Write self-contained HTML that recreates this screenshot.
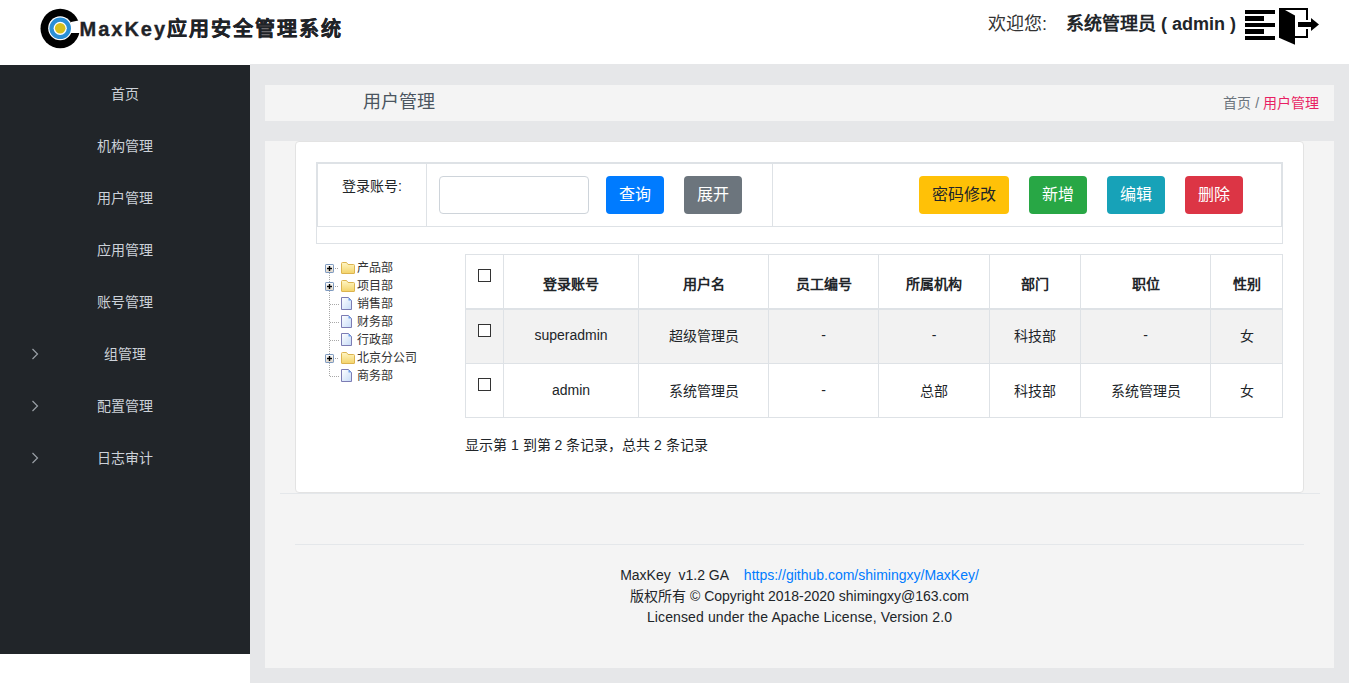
<!DOCTYPE html>
<html lang="zh-CN"><head><meta charset="utf-8">
<style>
*{box-sizing:border-box;margin:0;padding:0}
html,body{width:1349px;height:683px;overflow:hidden;background:#fff;font-family:"Liberation Sans",sans-serif;color:#212529;font-size:14px}
.abs{position:absolute}
#header{position:absolute;left:0;top:0;width:1349px;height:64px;background:#fff}
#title{position:absolute;left:79.5px;top:15px;font-size:20px;font-weight:bold;letter-spacing:2px;color:#1f2328;-webkit-text-stroke:0.35px #1f2328;line-height:28px;white-space:nowrap}
#welcome{position:absolute;left:988px;top:11px;font-size:18px;line-height:26px;color:#333;white-space:nowrap}
#welcome2{position:absolute;left:1066px;top:11px;font-size:18px;line-height:26px;color:#212529;font-weight:bold;white-space:nowrap}
#sidebar{position:absolute;left:0;top:65px;width:250px;height:589px;background:#212529}
#sideitems .item{position:absolute;left:0;width:250px;text-align:center;color:#ccd1d8;font-size:14px;line-height:20px}
#sidebar .chev{position:absolute;left:32px;width:6px;height:11px}
#main{position:absolute;left:250px;top:64px;width:1099px;height:619px;background:#e6e7e9}
#crumb{position:absolute;left:265px;top:85px;width:1069px;height:36px;background:#f4f4f4}
#crumb .t{position:absolute;left:98px;top:4.5px;font-size:18px;line-height:24px;color:#4b5560}
#crumb .r{position:absolute;right:15px;top:8px;font-size:14px;line-height:20px;color:#6c757d}
#crumb .r span{color:#e91e63}
#panel{position:absolute;left:265px;top:141px;width:1069px;height:527px;background:#f4f4f4}
#card{position:absolute;left:295px;top:141px;width:1009px;height:352px;background:#fff;border:1px solid #e3e3e3;border-radius:4px}

#sform{position:absolute;left:316px;top:162px;width:967px;height:82px;border:1px solid #dee2e6}
#sform .c1{position:absolute;left:0;top:0;width:110px;height:64px;border:1px solid #dee2e6}
#sform .c2{position:absolute;left:109px;top:0;width:347px;height:64px;border:1px solid #dee2e6}
#sform .c3{position:absolute;left:455px;top:0;width:510px;height:64px;border:1px solid #dee2e6}
.lbl{position:absolute;left:342px;top:176px;font-size:14px;line-height:20px;color:#212529}
.inp{position:absolute;left:439px;top:176px;width:150px;height:38px;border:1px solid #ced4da;border-radius:4px;background:#fff}
.btn{position:absolute;top:176px;height:38px;border-radius:4px;color:#fff;font-size:16px;line-height:38px;text-align:center}
.tree{position:absolute;left:325px;top:258px;font-size:12px;color:#333}
.tree .row{position:absolute;left:0;height:18px;line-height:18px;white-space:nowrap}
#tbl{position:absolute;left:465px;top:254px;border-collapse:collapse;border:1px solid #dee2e6}
#tbl td,#tbl th{border:1px solid #dee2e6;text-align:center;font-size:14px;color:#212529;vertical-align:middle;padding:0 0 2px 0}
#tbl th{font-weight:bold;border-bottom:2px solid #dee2e6;padding-top:5px}
#tbl tr.odd td{background:#f2f2f2}
.cb{display:inline-block;width:13px;height:13px;border:1px solid #333;background:#fff;vertical-align:top}
.pg{position:absolute;left:465px;top:435px;font-size:14px;line-height:20px;color:#212529;white-space:nowrap}
.hr1{position:absolute;left:280px;top:493px;width:1040px;height:1px;background:#e4e7ea}
.hr2{position:absolute;left:295px;top:544px;width:1009px;height:1px;background:#e4e7ea}
#foot{position:absolute;left:265px;top:565px;width:1069px;text-align:center;font-size:14px;line-height:21px;color:#212529}
#foot a{color:#007bff;text-decoration:none}
.trow{position:absolute;left:357px;height:18px;line-height:18px;font-size:12px;color:#333;white-space:nowrap}
</style></head><body>
<div id="header">
 <svg class="abs" style="left:40px;top:8px" width="41" height="41" viewBox="0 0 41 41">
  <circle cx="20.2" cy="20.5" r="19.7" fill="#000"/>
  <polygon points="31,14 41,12 41,25 31,25" fill="#fff"/>
  <circle cx="20.2" cy="20.3" r="12" fill="#fff"/>
  <circle cx="20.2" cy="20.3" r="10.8" fill="#2a8fd6"/>
  <circle cx="20.2" cy="20.3" r="6.6" fill="#fff"/>
  <circle cx="20.2" cy="20.3" r="5.3" fill="#d6bf1d"/>
 </svg>
 <div id="title">MaxKey应用安全管理系统</div>
 <div id="welcome">欢迎您:</div><div id="welcome2">系统管理员 ( admin )</div>
 <svg class="abs" style="left:1240px;top:0px" width="90" height="50" viewBox="0 0 90 50">
  <rect x="5" y="10" width="30" height="4" fill="#000"/>
  <rect x="5" y="16" width="19" height="5" fill="#000"/>
  <rect x="5" y="23" width="30" height="4" fill="#000"/>
  <rect x="5" y="29" width="19" height="5" fill="#000"/>
  <rect x="5" y="36" width="30" height="4" fill="#000"/>
  <rect x="39" y="8" width="29" height="2" fill="#000"/>
  <rect x="66" y="8" width="2" height="12" fill="#000"/>
  <rect x="66" y="29" width="2" height="9" fill="#000"/>
  <rect x="55" y="36" width="13" height="2" fill="#000"/>
  <polygon points="39,8 45,10 55,15.4 55,44.7 39,37.7" fill="#000"/>
  <rect x="58" y="22" width="13" height="5" fill="#000"/>
  <polygon points="71,18 79,24.5 71,31" fill="#000"/>
 </svg>
</div>
<div id="sidebar"></div>
<div id="sideitems"><div class="item" style="top:84px">首页</div>
<div class="item" style="top:136px">机构管理</div>
<div class="item" style="top:188px">用户管理</div>
<div class="item" style="top:240px">应用管理</div>
<div class="item" style="top:292px">账号管理</div>
<div class="item" style="top:344px">组管理</div>
<svg class="abs" style="left:31px;top:348px" width="8" height="12" viewBox="0 0 8 12"><polyline points="1.5,1 6.5,6 1.5,11" fill="none" stroke="#9aa0a6" stroke-width="1.2"/></svg>
<div class="item" style="top:396px">配置管理</div>
<svg class="abs" style="left:31px;top:400px" width="8" height="12" viewBox="0 0 8 12"><polyline points="1.5,1 6.5,6 1.5,11" fill="none" stroke="#9aa0a6" stroke-width="1.2"/></svg>
<div class="item" style="top:448px">日志审计</div>
<svg class="abs" style="left:31px;top:452px" width="8" height="12" viewBox="0 0 8 12"><polyline points="1.5,1 6.5,6 1.5,11" fill="none" stroke="#9aa0a6" stroke-width="1.2"/></svg>
</div>
<div id="main"></div>
<div id="crumb"><div class="t">用户管理</div><div class="r">首页 / <span>用户管理</span></div></div>
<div id="panel"></div>
<div id="card"></div>

<div id="sform"><div class="c1"></div><div class="c2"></div><div class="c3"></div></div>
<div class="lbl">登录账号:</div>
<div class="inp"></div>
<div class="btn" style="left:606px;width:58px;background:#007bff">查询</div>
<div class="btn" style="left:684px;width:58px;background:#6c757d">展开</div>
<div class="btn" style="left:919px;width:90px;background:#ffc107;color:#212529">密码修改</div>
<div class="btn" style="left:1029px;width:58px;background:#28a745">新增</div>
<div class="btn" style="left:1107px;width:58px;background:#17a2b8">编辑</div>
<div class="btn" style="left:1185px;width:58px;background:#dc3545">删除</div>
<svg class="abs" style="left:320px;top:255px" width="40" height="135" viewBox="0 0 40 135">
<defs><linearGradient id="gf" x1="0" y1="0" x2="0" y2="1"><stop offset="0" stop-color="#fff6c4"/><stop offset="1" stop-color="#f3d36a"/></linearGradient>
<linearGradient id="gp" x1="0" y1="0" x2="1" y2="1"><stop offset="0" stop-color="#ffffff"/><stop offset="1" stop-color="#c6dbf7"/></linearGradient>
<linearGradient id="gb" x1="0" y1="0" x2="0" y2="1"><stop offset="0" stop-color="#ffffff"/><stop offset="1" stop-color="#ddd5c8"/></linearGradient></defs>
<line x1="9.5" y1="18" x2="9.5" y2="121.5" stroke="#a8a8a8" stroke-width="1" stroke-dasharray="1,1"/>
<line x1="15" y1="13.5" x2="19" y2="13.5" stroke="#a8a8a8" stroke-dasharray="1,1"/>
<rect x="5.5" y="9.5" width="8" height="8" rx="0.6" fill="url(#gb)" stroke="#7d9ac0"/>
<rect x="7" y="12.8" width="5" height="1.4" fill="#000"/><rect x="8.8" y="11" width="1.4" height="5" fill="#000"/>
<path transform="translate(21,7)" d="M0.5,1.5 Q0.5,0.5 1.5,0.5 L5.5,0.5 L7,2.5 L12.5,2.5 Q13.5,2.5 13.5,3.5 L13.5,11 Q13.5,11.5 13,11.5 L1,11.5 Q0.5,11.5 0.5,11 Z" fill="url(#gf)" stroke="#dcb450"/>
<line x1="15" y1="31.5" x2="19" y2="31.5" stroke="#a8a8a8" stroke-dasharray="1,1"/>
<rect x="5.5" y="27.5" width="8" height="8" rx="0.6" fill="url(#gb)" stroke="#7d9ac0"/>
<rect x="7" y="30.8" width="5" height="1.4" fill="#000"/><rect x="8.8" y="29" width="1.4" height="5" fill="#000"/>
<path transform="translate(21,25)" d="M0.5,1.5 Q0.5,0.5 1.5,0.5 L5.5,0.5 L7,2.5 L12.5,2.5 Q13.5,2.5 13.5,3.5 L13.5,11 Q13.5,11.5 13,11.5 L1,11.5 Q0.5,11.5 0.5,11 Z" fill="url(#gf)" stroke="#dcb450"/>
<line x1="10" y1="49.5" x2="19" y2="49.5" stroke="#a8a8a8" stroke-dasharray="1,1"/>
<path transform="translate(21,42)" d="M0.5,0.5 L7.5,0.5 L10.5,3.5 L10.5,12.5 L0.5,12.5 Z" fill="url(#gp)" stroke="#7c7cb4"/>
<path transform="translate(21,42)" d="M7.5,0.5 L10.5,3.5 L7.5,3.5 Z" fill="#6d9ee8"/>
<line x1="10" y1="67.5" x2="19" y2="67.5" stroke="#a8a8a8" stroke-dasharray="1,1"/>
<path transform="translate(21,60)" d="M0.5,0.5 L7.5,0.5 L10.5,3.5 L10.5,12.5 L0.5,12.5 Z" fill="url(#gp)" stroke="#7c7cb4"/>
<path transform="translate(21,60)" d="M7.5,0.5 L10.5,3.5 L7.5,3.5 Z" fill="#6d9ee8"/>
<line x1="10" y1="85.5" x2="19" y2="85.5" stroke="#a8a8a8" stroke-dasharray="1,1"/>
<path transform="translate(21,78)" d="M0.5,0.5 L7.5,0.5 L10.5,3.5 L10.5,12.5 L0.5,12.5 Z" fill="url(#gp)" stroke="#7c7cb4"/>
<path transform="translate(21,78)" d="M7.5,0.5 L10.5,3.5 L7.5,3.5 Z" fill="#6d9ee8"/>
<line x1="15" y1="103.5" x2="19" y2="103.5" stroke="#a8a8a8" stroke-dasharray="1,1"/>
<rect x="5.5" y="99.5" width="8" height="8" rx="0.6" fill="url(#gb)" stroke="#7d9ac0"/>
<rect x="7" y="102.8" width="5" height="1.4" fill="#000"/><rect x="8.8" y="101" width="1.4" height="5" fill="#000"/>
<path transform="translate(21,97)" d="M0.5,1.5 Q0.5,0.5 1.5,0.5 L5.5,0.5 L7,2.5 L12.5,2.5 Q13.5,2.5 13.5,3.5 L13.5,11 Q13.5,11.5 13,11.5 L1,11.5 Q0.5,11.5 0.5,11 Z" fill="url(#gf)" stroke="#dcb450"/>
<line x1="10" y1="121.5" x2="19" y2="121.5" stroke="#a8a8a8" stroke-dasharray="1,1"/>
<path transform="translate(21,114)" d="M0.5,0.5 L7.5,0.5 L10.5,3.5 L10.5,12.5 L0.5,12.5 Z" fill="url(#gp)" stroke="#7c7cb4"/>
<path transform="translate(21,114)" d="M7.5,0.5 L10.5,3.5 L7.5,3.5 Z" fill="#6d9ee8"/>
</svg>
<div class="trow" style="top:259px">产品部</div><div class="trow" style="top:277px">项目部</div><div class="trow" style="top:295px">销售部</div><div class="trow" style="top:313px">财务部</div><div class="trow" style="top:331px">行政部</div><div class="trow" style="top:349px">北京分公司</div><div class="trow" style="top:367px">商务部</div>
<table id="tbl">
<tr class="hd" style="height:54px"><th style="width:38px;vertical-align:top;padding-top:14px"><span class="cb"></span></th><th style="width:135px">登录账号</th><th style="width:130px">用户名</th><th style="width:110px">员工编号</th><th style="width:111px">所属机构</th><th style="width:91px">部门</th><th style="width:130px">职位</th><th style="width:72px">性别</th></tr>
<tr class="odd" style="height:55px"><td style="vertical-align:top;padding-top:14px"><span class="cb"></span></td><td>superadmin</td><td>超级管理员</td><td>-</td><td>-</td><td>科技部</td><td>-</td><td>女</td></tr>
<tr style="height:54px"><td style="vertical-align:top;padding-top:14px"><span class="cb"></span></td><td>admin</td><td>系统管理员</td><td>-</td><td>总部</td><td>科技部</td><td>系统管理员</td><td>女</td></tr>
</table>
<div class="pg">显示第 1 到第 2 条记录，总共 2 条记录</div>
<div class="hr1"></div>
<div class="hr2"></div>
<div id="foot">MaxKey&nbsp; v1.2 GA &nbsp;&nbsp; <a>https://github.com/shimingxy/MaxKey/</a><br>版权所有 © Copyright 2018-2020 shimingxy@163.com<br><span style="letter-spacing:0.12px">Licensed under the Apache License, Version 2.0</span></div>
</body></html>
